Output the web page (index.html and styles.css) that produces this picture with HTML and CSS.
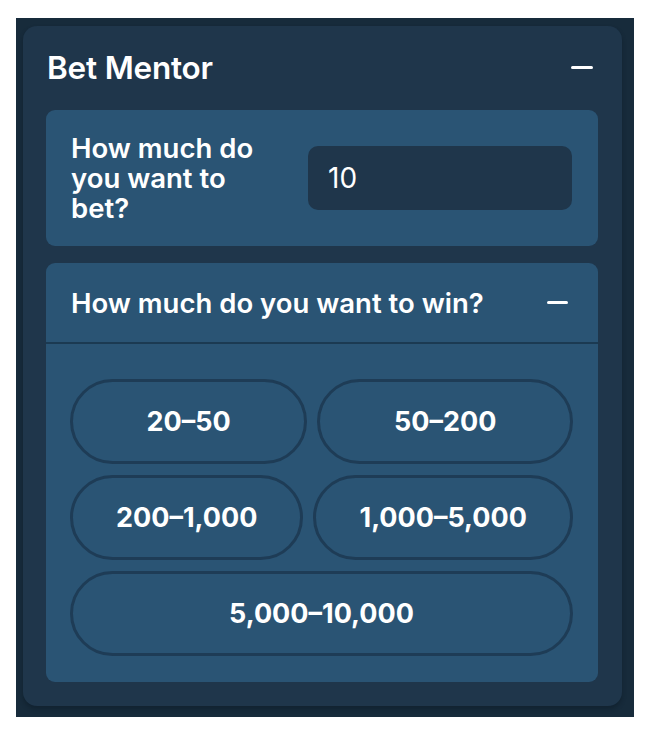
FILE: index.html
```html
<!DOCTYPE html>
<html lang="en">
<head>
<meta charset="utf-8">
<title>Bet Mentor</title>
<link rel="stylesheet" href="styles.css">
</head>
<body>
<div class="frame">
  <section class="card">
    <header class="card-head">
      <h1 class="title">Bet Mentor</h1>
      <button class="collapse collapse-lg" aria-label="Collapse"></button>
    </header>

    <div class="panel bet-panel">
      <label class="bet-label" for="bet">How much do you want to bet?</label>
      <input id="bet" class="bet-input" type="text" value="10">
    </div>

    <div class="panel win-panel">
      <div class="win-head">
        <span class="win-title">How much do you want to win?</span>
        <button class="collapse collapse-sm" aria-label="Collapse"></button>
      </div>
      <div class="ranges">
        <button class="range">20–50</button>
        <button class="range">50–200</button>
        <button class="range">200–1,000</button>
        <button class="range">1,000–5,000</button>
        <button class="range">5,000–10,000</button>
      </div>
    </div>
  </section>
</div>
</body>
</html>
```

FILE: styles.css
```css
* {
  box-sizing: border-box;
}

body {
  margin: 0;
  background: #ffffff;
  font-family: Inter, "Noto Sans", sans-serif;
  color: #ffffff;
}

.frame {
  width: 618px;
  height: 699px;
  margin: 18px 0 0 16px;
  padding: 8px 12px 11px 7px;
  background: #172b3b;
}

.card {
  height: 100%;
  background: #1f364b;
  border-radius: 14px;
  padding: 0 24px 24px 23px;
  display: flex;
  flex-direction: column;
  gap: 17px;
  box-shadow: 0 3px 4px rgba(10, 24, 36, 0.45);
}

.card-head {
  height: 84px;
  display: flex;
  align-items: center;
  justify-content: space-between;
  padding: 0 5px 0 1px;
  margin-bottom: -17px;
}

.title {
  margin: 0;
  font-size: 31.5px;
  font-weight: 600;
  letter-spacing: -0.2px;
}

.collapse {
  border: 0;
  padding: 0;
  background: #ffffff;
  border-radius: 2px;
  cursor: pointer;
}

.collapse-lg {
  width: 22px;
  height: 3px;
}

.collapse-sm {
  width: 21px;
  height: 3px;
}

.panel {
  background: #2a5474;
  border-radius: 9px;
}

.bet-panel {
  height: 137px;
  display: flex;
  align-items: center;
  gap: 38px;
  padding: 0 26px 0 25px;
}

.bet-label {
  flex: 1;
  font-size: 27.5px;
  font-weight: 600;
  line-height: 30px;
}

.bet-input {
  width: 264px;
  height: 64px;
  border: 0;
  border-radius: 10px;
  background: #1f364b;
  color: #ffffff;
  font-family: inherit;
  font-size: 28px;
  font-weight: 400;
  padding: 0 20px;
  outline: none;
}

.win-panel {
  flex: 1;
  display: flex;
  flex-direction: column;
}

.win-head {
  height: 81px;
  display: flex;
  align-items: center;
  justify-content: space-between;
  padding: 0 30px 0 25px;
  border-bottom: 2px solid #1b3a52;
}

.win-title {
  font-size: 27.5px;
  font-weight: 600;
}

.ranges {
  display: flex;
  flex-wrap: wrap;
  gap: 11px 10px;
  padding: 35px 25px 26px 24px;
}

.range {
  flex: 1 1 auto;
  height: 85px;
  padding: 0 32px;
  border: 3px solid #1e3c56;
  border-radius: 43px;
  background: #2a5474;
  color: #ffffff;
  font-family: inherit;
  font-size: 27px;
  font-weight: 700;
  cursor: pointer;
}
```
